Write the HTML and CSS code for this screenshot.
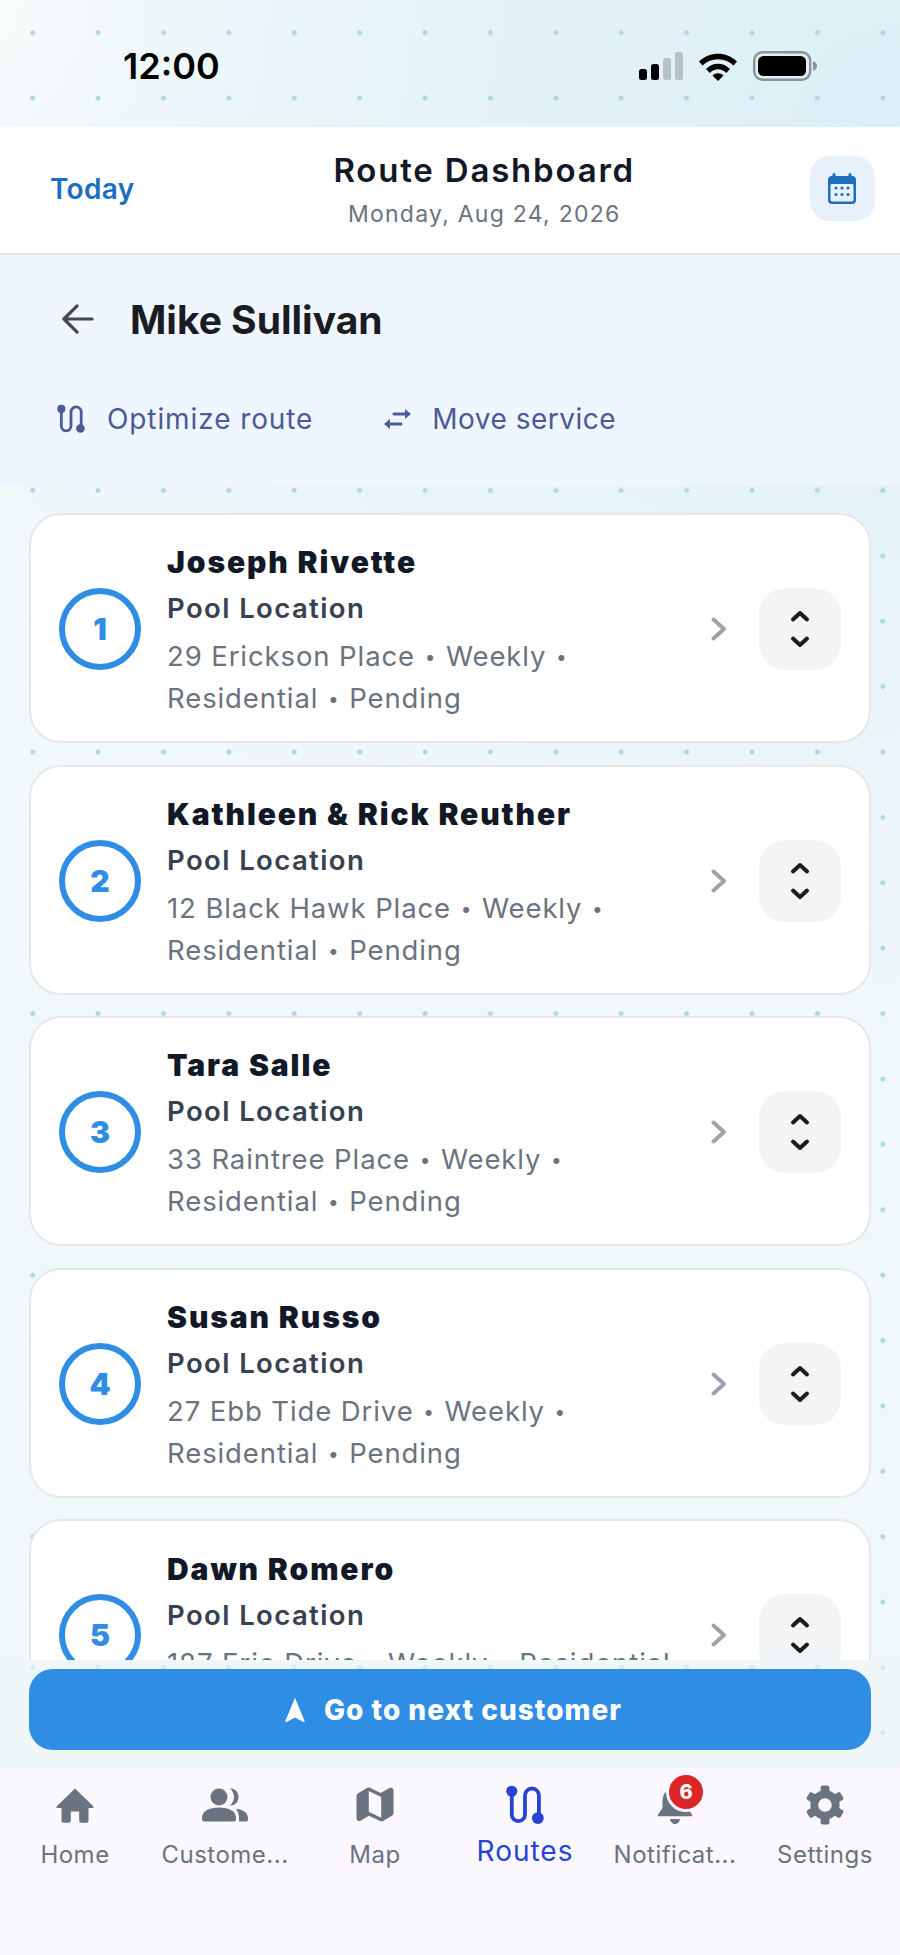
FILE: index.html
```html
<!DOCTYPE html>
<html lang="en">
<head>
<meta charset="utf-8">
<title>Route Dashboard</title>
<link rel="stylesheet" href="styles.css">
</head>
<body>
<svg class="defs" width="0" height="0" aria-hidden="true">
  <symbol id="route" viewBox="0 0 110 115">
    <path d="M17 20V85a19 19 0 0 0 38 0V30a20 20 0 0 1 40 0V95" fill="none" stroke="currentColor" stroke-width="11" stroke-linecap="round"/>
    <circle cx="17" cy="18" r="16" fill="currentColor"/><circle cx="92" cy="95" r="17" fill="currentColor"/>
  </symbol>
  <symbol id="stepper" viewBox="0 0 20 38">
    <path d="M3 9.500L10 3l7 6.500M3 28.500L10 35l7-6.500" fill="none" stroke="#1c1c1e" stroke-width="4" stroke-linecap="round" stroke-linejoin="round"/>
  </symbol>
  <symbol id="chev" viewBox="0 0 16 24">
    <path d="M2.500 2.500L13 12 2.500 21.500" fill="none" stroke="#9ca3af" stroke-width="4" stroke-linecap="round" stroke-linejoin="round"/>
  </symbol>
</svg>
<div class="app">
  <div class="status">
    <span class="time">12:00</span>
    <div class="status-icons">
      <svg class="signal" viewBox="0 0 44 28"><rect x="0" y="17" width="8" height="11" rx="2.500" fill="#000"/><rect x="12" y="12" width="8" height="16" rx="2.500" fill="#000"/><rect x="24" y="6" width="8" height="22" rx="2.500" fill="#b4c2c8"/><rect x="36" y="0" width="8" height="28" rx="2.500" fill="#b4c2c8"/></svg>
      <svg class="wifi" viewBox="0 0 40 30"><path d="M1 10.500C11.500 0 28.500 0 39 10.500l-3.500 4C27 6 13 6 4.500 14.500zM8 18c7-7 17-7 24 0l-3.800 4C23.500 17 16.500 17 11.800 22zM14.500 24.500c3-3 8-3 11 0L20 30z" fill="#000"/></svg>
      <svg class="battery" viewBox="0 0 64 30"><rect x="1.200" y="1.200" width="56" height="27.600" rx="8.500" fill="none" stroke="#8a9296" stroke-width="2.400"/><rect x="5" y="5" width="48" height="20" rx="5.500" fill="#000"/><path d="M60 10.500c2.500.5 4 2 4 4.500s-1.500 4-4 4.500z" fill="#8a9296"/></svg>
    </div>
  </div>
  <header class="topbar">
    <span class="today">Today</span>
    <div class="titles">
      <div class="title">Route Dashboard</div>
      <div class="date">Monday, Aug 24, 2026</div>
    </div>
    <button class="cal-btn" aria-label="Calendar">
      <svg class="cal" viewBox="0 0 28 31"><path d="M6 0a1.500 1.500 0 0 1 1.500 1.500V3h13V1.500a1.500 1.500 0 0 1 3 0V3h.5A4 4 0 0 1 28 7v20a4 4 0 0 1-4 4H4a4 4 0 0 1-4-4V7a4 4 0 0 1 4-4h.500V1.500A1.500 1.500 0 0 1 6 0z" fill="#1d6dbf"/><rect x="2.500" y="11" width="23" height="17.500" rx="1.500" fill="#e8f1fb"/><g fill="#1d6dbf"><circle cx="8" cy="15" r="1.600"/><circle cx="14" cy="15" r="1.600"/><circle cx="20" cy="15" r="1.600"/><circle cx="8" cy="21.500" r="1.600"/><circle cx="14" cy="21.500" r="1.600"/><circle cx="20" cy="21.500" r="1.600"/></g></svg>
    </button>
  </header>
  <section class="subhead">
    <div class="person">
      <svg class="back" viewBox="0 0 34 32"><path d="M32 16H2M16 2L2 16l14 14" fill="none" stroke="#48484f" stroke-width="3.400" stroke-linecap="round" stroke-linejoin="round"/></svg>
      <h1 class="person-name">Mike Sullivan</h1>
    </div>
    <div class="actions">
      <div class="action"><svg class="act-route"><use href="#route"/></svg><span>Optimize route</span></div>
      <div class="action move"><svg class="act-move" viewBox="0 0 28 22"><path d="M11 6h12M6 16h12" fill="none" stroke="currentColor" stroke-width="3" stroke-linecap="round"/><path d="M22 1l6 5-6 5zM7 11l-6 5 6 5z" fill="currentColor"/></svg><span>Move service</span></div>
    </div>
  </section>
  <main class="list">
    <article class="card">
      <div class="num">1</div>
      <div class="info"><div class="name">Joseph Rivette</div><div class="loc">Pool Location</div><div class="addr">29 Erickson Place <span class="sep">•</span> Weekly <span class="sep">•</span> Residential <span class="sep">•</span> Pending</div></div>
      <svg class="chev"><use href="#chev"/></svg>
      <div class="step"><svg class="step-icon"><use href="#stepper"/></svg></div>
    </article>
    <article class="card">
      <div class="num">2</div>
      <div class="info"><div class="name">Kathleen &amp; Rick Reuther</div><div class="loc">Pool Location</div><div class="addr">12 Black Hawk Place <span class="sep">•</span> Weekly <span class="sep">•</span> Residential <span class="sep">•</span> Pending</div></div>
      <svg class="chev"><use href="#chev"/></svg>
      <div class="step"><svg class="step-icon"><use href="#stepper"/></svg></div>
    </article>
    <article class="card">
      <div class="num">3</div>
      <div class="info"><div class="name">Tara Salle</div><div class="loc">Pool Location</div><div class="addr">33 Raintree Place <span class="sep">•</span> Weekly <span class="sep">•</span> Residential <span class="sep">•</span> Pending</div></div>
      <svg class="chev"><use href="#chev"/></svg>
      <div class="step"><svg class="step-icon"><use href="#stepper"/></svg></div>
    </article>
    <article class="card">
      <div class="num">4</div>
      <div class="info"><div class="name">Susan Russo</div><div class="loc">Pool Location</div><div class="addr">27 Ebb Tide Drive <span class="sep">•</span> Weekly <span class="sep">•</span> Residential <span class="sep">•</span> Pending</div></div>
      <svg class="chev"><use href="#chev"/></svg>
      <div class="step"><svg class="step-icon"><use href="#stepper"/></svg></div>
    </article>
    <article class="card">
      <div class="num">5</div>
      <div class="info"><div class="name">Dawn Romero</div><div class="loc">Pool Location</div><div class="addr">187 Erie Drive <span class="sep">•</span> Weekly <span class="sep">•</span> Residential <span class="sep">•</span> Pending</div></div>
      <svg class="chev"><use href="#chev"/></svg>
      <div class="step"><svg class="step-icon"><use href="#stepper"/></svg></div>
    </article>
  </main>
  <div class="footer">
    <button class="go">
      <svg class="go-icon" viewBox="0 0 20 24"><path d="M10 0.800l8.800 21.200c.3.800-.4 1.400-1.100 1L10 19 2.300 23c-.7.400-1.400-.2-1.100-1z" fill="#fff"/></svg>
      <span>Go to next customer</span>
    </button>
  </div>
  <nav class="tabs">
    <div class="tab">
      <svg class="tab-icon" viewBox="0 0 40 40"><path d="M20 3.500L38.500 21.500c.4.600 0 1.500-.8 1.500H33.500V36a1.800 1.800 0 0 1-1.800 1.800H26a1.800 1.800 0 0 1-1.800-1.800V26.500H15.800V36a1.800 1.800 0 0 1-1.800 1.800H8.300A1.800 1.800 0 0 1 6.500 36V23H2.300c-.8 0-1.200-.9-.8-1.500z" fill="#6b7280"/></svg>
      <span class="tab-label">Home</span>
    </div>
    <div class="tab">
      <svg class="tab-icon wide" viewBox="0 0 46 40"><circle cx="17" cy="12" r="8.500" fill="#6b7280"/><path d="M0 33c0-7 7-10.500 17-10.500S34 26 34 33v1.500a2 2 0 0 1-2 2H2a2 2 0 0 1-2-2z" fill="#6b7280"/><path d="M28 3.500c5-.5 8.500 3.500 8.500 8.500s-3.500 9-8.500 8.500c2.500-2.300 4-5.300 4-8.500s-1.500-6.200-4-8.500zM36 24c5.500 1 10 4 10 9v1.500a2 2 0 0 1-2 2h-7V33c0-3.500-1-6.500-3-9z" fill="#6b7280"/></svg>
      <span class="tab-label">Custome...</span>
    </div>
    <div class="tab">
      <svg class="tab-icon" viewBox="-1.500 -2 40 40"><path fill-rule="evenodd" d="M3 5.500L10.500 1c1.200-.6 2.400-.6 3.500 0l9 4.500c.7.300 1.300.3 2 0L33 1c1.800-1 4 .2 4 2.200v22.600c0 1.400-.6 2.400-1.800 3.100L27 33.800c-1.300.7-2.700.7-4 0l-9.500-4.500c-.7-.3-1.300-.3-2 0L4 33.800c-1.800 1-4-.2-4-2.200V9c0-1.500 1-2.700 3-3.500zM12.300 4v20.700l12.400 6V10z" fill="#6b7280"/></svg>
      <span class="tab-label">Map</span>
    </div>
    <div class="tab active">
      <svg class="tab-icon"><use href="#route"/></svg>
      <span class="tab-label">Routes</span>
    </div>
    <div class="tab">
      <span class="bell-wrap">
        <svg class="tab-icon" viewBox="0 0 40 40"><path d="M20 3c8 0 12.500 6 12.500 13v7l4.500 6.500c.6.900 0 1.800-1 1.800H4c-1 0-1.600-.9-1-1.800L7.500 23v-7C7.500 9 12 3 20 3zM15 34h10c-.5 3-2.500 5-5 5s-4.500-2-5-5z" fill="#6b7280"/></svg>
        <span class="badge">6</span>
      </span>
      <span class="tab-label">Notificat...</span>
    </div>
    <div class="tab">
      <svg class="tab-icon" viewBox="0 0 40 41">
        <g fill="#6b7280">
          <rect x="15.500" y="0.500" width="9" height="9" rx="2"/>
          <rect x="15.500" y="0.500" width="9" height="9" rx="2" transform="rotate(60 20 20.500)"/>
          <rect x="15.500" y="0.500" width="9" height="9" rx="2" transform="rotate(120 20 20.500)"/>
          <rect x="15.500" y="0.500" width="9" height="9" rx="2" transform="rotate(180 20 20.500)"/>
          <rect x="15.500" y="0.500" width="9" height="9" rx="2" transform="rotate(240 20 20.500)"/>
          <rect x="15.500" y="0.500" width="9" height="9" rx="2" transform="rotate(300 20 20.500)"/>
        </g>
        <circle cx="20" cy="20.500" r="11" fill="none" stroke="#6b7280" stroke-width="8"/>
      </svg>
      <span class="tab-label">Settings</span>
    </div>
  </nav>
</div>
</body>
</html>
```
FILE: styles.css
```css
* { box-sizing: border-box; }
html, body { margin: 0; padding: 0; }
body { font-family: Inter, "Noto Sans", sans-serif; }
.defs { position: absolute; }
.app {
  width: 900px; height: 1955px; display: flex; flex-direction: column; overflow: hidden;
  background-color: #f1f8fa;
  background-image:
    radial-gradient(circle at 32.7px 32.7px, #aed8e6 2.2px, transparent 2.9px),
    radial-gradient(1000px 900px at 100% 6%, #dceff6 0%, rgba(220,239,246,0) 100%),
    radial-gradient(300px 300px at 0 0, #fbfdfd 0%, rgba(251,253,253,0) 100%);
  background-size: 65.4px 65.4px, 100% 100%, 100% 100%;
}
.status { height: 127px; flex: none; display: flex; align-items: center; justify-content: space-between; padding: 4px 83px 0 123px; }
.time { font-size: 36px; font-weight: 600; color: #000; }
.status-icons { display: flex; align-items: center; gap: 15px; }
.signal { width: 44px; height: 28px; }
.wifi { width: 40px; height: 30px; }
.battery { width: 64px; height: 30px; }
.topbar { height: 128px; flex: none; background: #fff; border-bottom: 2px solid #e5e7eb; display: flex; align-items: center; justify-content: space-between; padding: 0 25px 0 50px; }
.today { font-size: 28px; font-weight: 600; color: #1d6dbf; letter-spacing: .3px; margin-top: -3px; }
.titles { text-align: center; margin-left: 24px; }
.title { font-size: 33px; font-weight: 600; color: #111827; letter-spacing: 1.800px; line-height: 44px; margin-top: -4px; }
.date { font-size: 23px; color: #6b7280; letter-spacing: 1.250px; line-height: 36px; margin-top: 4px; margin-bottom: -4px; }
.cal-btn { width: 65px; height: 65px; border: 0; border-radius: 20px; background: #e8f1fb; display: flex; align-items: center; justify-content: center; padding: 0; margin-top: -3px; }
.cal { width: 28px; height: 31px; }
.subhead { height: 230px; flex: none; background: #eff6ff; padding: 0 0 0 62px; display: flex; flex-direction: column; }
.person { display: flex; align-items: center; height: 128px; gap: 36px; }
.back { width: 32px; height: 32px; }
.person-name { margin: 0; font-size: 39px; font-weight: 700; color: #1a1c23; }
.actions { display: flex; gap: 70px; margin-left: -5px; margin-top: 19px; }
.action { display: flex; align-items: center; font-size: 28px; color: #4c5a96; letter-spacing: .9px; gap: 22px; }
.action.move { letter-spacing: .5px; gap: 21px; }
.act-route { width: 28px; height: 30px; }
.act-move { width: 28px; height: 22px; }
.list { flex: 1; min-height: 0; overflow: hidden; padding: 28px 29px 0; display: flex; flex-direction: column; gap: 21.600px; }
.card { flex: none; height: 230px; border: 2px solid #e5e7eb; border-radius: 32px; background: rgba(255,255,255,.97); display: flex; align-items: center; padding: 2px 27px 0 28px; }
.num { width: 82px; height: 82px; flex: none; border: 6px solid #2f8de4; border-radius: 50%; color: #2f8de4; font-size: 30px; font-weight: 900; display: flex; align-items: center; justify-content: center; }
.info { width: 540px; flex: none; margin: 2px 0 0 26px; }
.name { font-size: 30px; font-weight: 900; color: #111827; letter-spacing: 1.900px; line-height: 44px; margin-bottom: 1px; }
.loc { font-size: 27.500px; font-weight: 600; color: #374151; letter-spacing: 1.400px; line-height: 46px; }
.addr { font-size: 27.500px; color: #6b7280; letter-spacing: .9px; line-height: 41px; margin-top: 5px; }
.sep { font-size: 19px; margin: 0 1px; vertical-align: 2px; }
.chev { width: 16px; height: 24px; margin-left: 4px; flex: none; }
.step { width: 82px; height: 82px; flex: none; margin-left: 32px; background: #f3f4f6; border-radius: 26px; display: flex; align-items: center; justify-content: center; }
.step-icon { width: 20px; height: 38px; }
.footer { height: 107px; flex: none; padding: 9px 29px 0; background: rgba(238,246,248,.6); }
.go { width: 842px; height: 81px; border: 0; border-radius: 24px; background: #2f8de4; color: #fff; font: 800 28px Inter, sans-serif; letter-spacing: 1px; display: flex; align-items: center; justify-content: center; gap: 18px; padding: 0 0 0 6px; }
.go-icon { width: 22px; height: 26px; }
.tabs { height: 188px; flex: none; background: #fbf9ff; display: flex; padding-top: 18px; }
.tab { width: 150px; display: flex; flex-direction: column; align-items: center; color: #6b7280; }
.tab-icon { width: 40px; height: 40px; display: block; }
.tab-icon.wide { width: 46px; }
.tab-label { font-size: 24px; line-height: 32px; margin-top: 14px; letter-spacing: .5px; white-space: nowrap; }
.tab.active { color: #2643d4; }
.tab.active .tab-label { font-size: 28px; margin-top: 10px; letter-spacing: 1px; }
.bell-wrap { position: relative; display: block; width: 40px; height: 40px; }
.badge { position: absolute; left: 11px; top: -13px; width: 40px; height: 40px; border-radius: 50%; background: #dc2626; border: 3px solid #fbf9ff; color: #fff; font-size: 20px; font-weight: 800; display: flex; align-items: center; justify-content: center; }
```
